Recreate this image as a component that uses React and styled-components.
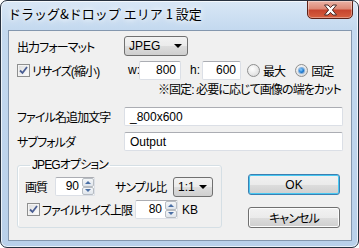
import React from "react";
import styled, { createGlobalStyle } from "styled-components";

const GlobalStyle = createGlobalStyle`
  html, body {
    margin: 0;
    padding: 0;
    background: #ffffff;
  }
  body {
    font-family: "Liberation Sans", "Noto Sans CJK JP", sans-serif;
    font-size: 12px;
    color: #000;
  }
`;

const Window = styled.div`
  box-sizing: border-box;
  width: 359px;
  height: 248px;
  border: 1px solid #27313f;
  border-radius: 7px;
  background: linear-gradient(180deg, #d9e7f6 0px, #c4d9ef 28px, #b9d0ea 100%);
  box-shadow: inset 0 0 0 1px rgba(255, 255, 255, 0.7);
  display: flex;
  flex-direction: column;
  overflow: hidden;
`;

const TitleBar = styled.div`
  flex: none;
  height: 29px;
  display: flex;
  justify-content: space-between;
  align-items: flex-start;
  padding: 0 5px 0 7px;
`;

const Title = styled.div`
  font-family: "Noto Sans CJK JP", sans-serif;
  font-size: 13px;
  line-height: 16px;
  margin-top: 5px;
  text-shadow: 0 0 5px #ffffff, 0 0 9px #ffffff;
`;

const CloseButton = styled.div`
  box-sizing: border-box;
  width: 46px;
  height: 19px;
  margin-top: -1px;
  border: 1px solid #5d2218;
  border-radius: 0 0 5px 5px;
  background: linear-gradient(180deg, #eab2a5 0%, #dd8a77 45%, #c7452e 55%, #d6603f 100%);
  box-shadow: inset 0 0 0 1px rgba(255, 255, 255, 0.35);
  display: flex;
  align-items: center;
  justify-content: center;
`;

const Client = styled.div`
  flex: 1;
  margin: 0 6px 6px 7px;
  border: 1px solid #8497ae;
  background: #f0f0f0;
  padding: 5px 8px 0 8px;
  display: flex;
  flex-direction: column;
`;

const Row = styled.div`
  display: flex;
  align-items: center;
  height: ${(p) => p.$h || 20}px;
  margin-top: ${(p) => p.$mt || 0}px;
`;

// CJK labels are narrowed to the width of the old bitmap UI font
const jp = (p) => `
  font-size: 12px;
  letter-spacing: ${p.$latin ? "0" : "-0.9px"};
  font-feature-settings: "palt";
  white-space: nowrap;
`;

const Label = styled.span`
  ${jp}
  flex: none;
  box-sizing: border-box;
  width: ${(p) => p.$w || 107}px;
  margin-left: ${(p) => p.$ml || 0}px;
  padding-left: ${(p) => p.$pl || 0}px;
`;

const Text = styled.span`
  ${jp}
  margin-left: ${(p) => p.$ml || 0}px;
`;

const Note = styled.div`
  ${jp}
  height: 13px;
  line-height: 13px;
  margin-top: 4px;
  margin-right: 2px;
  text-align: right;
`;

const Select = styled.div`
  box-sizing: border-box;
  flex: none;
  width: ${(p) => p.$w}px;
  height: 20px;
  border: 1px solid #707070;
  border-radius: 3px;
  background: linear-gradient(180deg, #f2f2f2 0%, #ebebeb 50%, #dddddd 51%, #cfcfcf 100%);
  display: flex;
  align-items: center;
  justify-content: space-between;
  padding: 0 5px 0 4px;
`;

const Arrow = styled.span`
  width: 0;
  height: 0;
  border-left: 4px solid transparent;
  border-right: 4px solid transparent;
  border-top: 4px solid #000;
`;

const TextBox = styled.div`
  box-sizing: border-box;
  flex: ${(p) => (p.$w ? "none" : "1")};
  width: ${(p) => (p.$w ? `${p.$w}px` : "auto")};
  height: 19px;
  margin-left: ${(p) => p.$ml || 0}px;
  background: #ffffff;
  border: 1px solid #dbdfe6;
  border-top-color: #abadb3;
  border-radius: 2px;
  display: flex;
  align-items: center;
  justify-content: ${(p) => (p.$right ? "flex-end" : "flex-start")};
  padding: 0 4px 0 5px;
  white-space: nowrap;
`;

const SpinBox = styled.div`
  box-sizing: border-box;
  flex: none;
  width: ${(p) => p.$w}px;
  height: 19px;
  margin-left: ${(p) => p.$ml || 0}px;
  background: #ffffff;
  border: 1px solid #dbdfe6;
  border-top-color: #abadb3;
  border-radius: 2px;
  display: flex;
  align-items: stretch;
`;

const SpinValue = styled.span`
  flex: 1;
  text-align: right;
  padding-right: 3px;
  line-height: 17px;
`;

const SpinButtons = styled.div`
  width: 12px;
  display: flex;
  flex-direction: column;
`;

const SpinHalf = styled.div`
  flex: 1;
  box-sizing: border-box;
  border: 1px solid #b7bcc2;
  border-radius: 2px;
  background: linear-gradient(180deg, #f4f6f8 0%, #dfe5ec 100%);
  display: flex;
  align-items: center;
  justify-content: center;
`;

const Tri = styled.span`
  width: 0;
  height: 0;
  border-left: 3px solid transparent;
  border-right: 3px solid transparent;
  ${(p) =>
    p.$up ? "border-bottom: 3px solid #4a6fa5;" : "border-top: 3px solid #4a6fa5;"}
`;

const CheckBox = styled.span`
  box-sizing: border-box;
  flex: none;
  width: 13px;
  height: 13px;
  margin-left: ${(p) => p.$ml || 0}px;
  margin-right: 2px;
  border: 1px solid #8e8f8f;
  background: linear-gradient(135deg, #dcdcdc 0%, #ffffff 100%);
  box-shadow: inset 0 0 0 1px #f4f4f4;
  display: flex;
  align-items: center;
  justify-content: center;
`;

const Radio = styled.span`
  box-sizing: border-box;
  flex: none;
  width: 13px;
  height: 13px;
  margin-left: ${(p) => p.$ml || 0}px;
  margin-right: 3px;
  border-radius: 50%;
  border: 1px solid #8e8f8f;
  background: radial-gradient(circle at 40% 35%, #ffffff 0%, #e6e6e6 60%, #cfcfcf 100%);
  display: flex;
  align-items: center;
  justify-content: center;

  &::after {
    content: "";
    display: ${(p) => (p.$on ? "block" : "none")};
    width: 5px;
    height: 5px;
    border-radius: 50%;
    background: radial-gradient(circle at 40% 35%, #8fd0ff 0%, #1c7bd4 55%, #0b4a91 100%);
    box-shadow: 0 0 1px 1px #7aa8d6;
  }
`;

const CheckLabel = styled.span`
  flex: none;
  display: flex;
  align-items: center;
  width: ${(p) => p.$w}px;
`;

const Bottom = styled.div`
  display: flex;
  align-items: flex-start;
  margin-top: 8px;
`;

const Group = styled.fieldset`
  box-sizing: border-box;
  width: 205px;
  margin: 0;
  padding: 0 0 8px 7px;
  border: 1px solid #d5dfe5;
  border-radius: 3px;
  box-shadow: inset 1px 1px 0 #ffffff;
`;

const Legend = styled.legend`
  ${jp}
  padding: 0 2px;
  margin-left: 5px;
  line-height: 13px;
`;

const Buttons = styled.div`
  display: flex;
  flex-direction: column;
  gap: 12px;
  margin-left: 26px;
  margin-top: 15px;
`;

const Button = styled.div`
  ${jp}
  box-sizing: border-box;
  width: 92px;
  height: 21px;
  border: 1px solid ${(p) => (p.$default ? "#3c7fb1" : "#707070")};
  border-radius: 3px;
  background: linear-gradient(180deg, #f2f2f2 0%, #ebebeb 50%, #dddddd 51%, #cfcfcf 100%);
  box-shadow: ${(p) =>
    p.$default ? "inset 0 0 0 1px #48c8f2" : "inset 0 0 0 1px #fcfcfc"};
  display: flex;
  align-items: center;
  justify-content: center;
`;

const Check = ({ ml }) => (
  <CheckBox $ml={ml}>
    <svg width="9" height="9" viewBox="0 0 9 9">
      <path d="M1 4.5 L3.5 7 L8 1" fill="none" stroke="#4b5f94" strokeWidth="1.8" />
    </svg>
  </CheckBox>
);

const Spinner = ({ value, w, ml }) => (
  <SpinBox $w={w} $ml={ml}>
    <SpinValue>{value}</SpinValue>
    <SpinButtons>
      <SpinHalf>
        <Tri $up />
      </SpinHalf>
      <SpinHalf>
        <Tri />
      </SpinHalf>
    </SpinButtons>
  </SpinBox>
);

export default function App() {
  return (
    <>
      <GlobalStyle />
      <Window>
        <TitleBar>
          <Title>ドラッグ&amp;ドロップ エリア 1 設定</Title>
          <CloseButton>
            <svg width="15" height="12" viewBox="0 0 15 12">
              <path
                d="M1.5 1 L5 1 L7.5 3.6 L10 1 L13.5 1 L9.4 6 L13.5 11 L10 11 L7.5 8.4 L5 11 L1.5 11 L5.6 6 Z"
                fill="#ffffff"
                stroke="#4a2a26"
                strokeWidth="1"
                strokeLinejoin="round"
              />
            </svg>
          </CloseButton>
        </TitleBar>
        <Client>
          <Row>
            <Label>出力フォーマット</Label>
            <Select $w={64}>
              <span>JPEG</span>
              <Arrow />
            </Select>
          </Row>
          <Row $mt={4}>
            <CheckLabel $w={107}>
              <Check />
              <Text>リサイズ(縮小)</Text>
            </CheckLabel>
            <Label $w={15} $pl={4} $latin>w:</Label>
            <TextBox $w={42} $right>800</TextBox>
            <Text $ml={9} $latin>h:</Text>
            <TextBox $w={39} $ml={2} $right>600</TextBox>
            <Radio $ml={6} />
            <Text>最大</Text>
            <Radio $ml={10} $on />
            <Text>固定</Text>
          </Row>
          <Note>※固定: 必要に応じて画像の端をカット</Note>
          <Row $mt={10} $h={19}>
            <Label>ファイル名追加文字</Label>
            <TextBox>_800x600</TextBox>
          </Row>
          <Row $mt={6} $h={19}>
            <Label>サブフォルダ</Label>
            <TextBox>Output</TextBox>
          </Row>
          <Bottom>
            <Group>
              <Legend>JPEGオプション</Legend>
              <Row $mt={5} $h={19}>
                <Label $w={30}>画質</Label>
                <Spinner value="90" w={40} />
                <Label $w={58} $ml={20}>サンプル比</Label>
                <Select $w={40}>
                  <span>1:1</span>
                  <Arrow />
                </Select>
              </Row>
              <Row $mt={4} $h={19}>
                <CheckLabel $w={110}>
                  <Check ml={2} />
                  <Text>ファイルサイズ上限</Text>
                </CheckLabel>
                <Spinner value="80" w={43} />
                <Text $ml={4} $latin>KB</Text>
              </Row>
            </Group>
            <Buttons>
              <Button $default $latin>OK</Button>
              <Button>キャンセル</Button>
            </Buttons>
          </Bottom>
        </Client>
      </Window>
    </>
  );
}
